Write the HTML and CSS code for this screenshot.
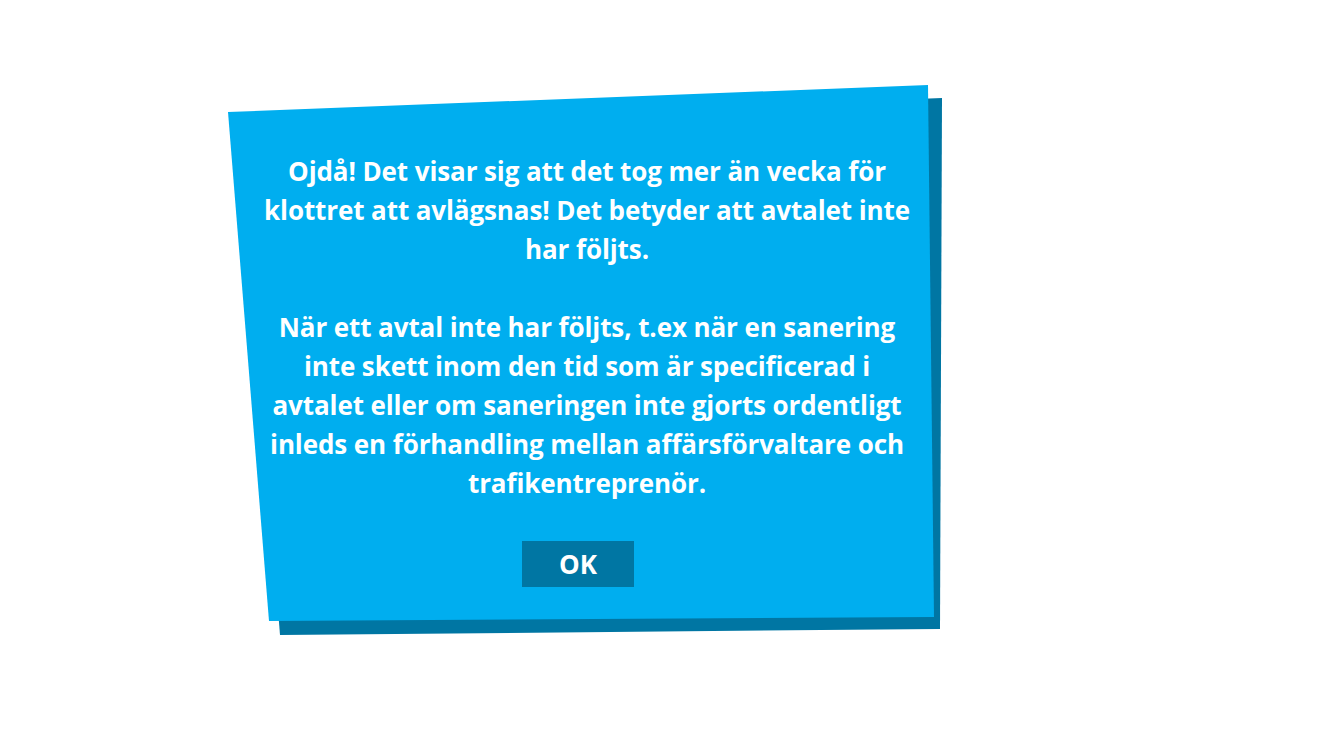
FILE: index.html
```html
<!DOCTYPE html>
<html lang="sv">
<head>
<meta charset="utf-8">
<title>Ojdå!</title>
<link rel="stylesheet" href="styles.css">
</head>
<body>
<div class="scene">
  <svg class="paper" width="716" height="552" viewBox="0 0 716 552" aria-hidden="true">
    <polygon class="shadow" points="13,41 715,14 713,545 53,551"/>
    <polygon class="sheet" points="1,28 701,1 707,533 42,537"/>
  </svg>
  <div class="content">
    <p class="message">Ojdå! Det visar sig att det tog mer än vecka för<br>klottret att avlägsnas! Det betyder att avtalet inte<br>har följts.<br><br>När ett avtal inte har följts, t.ex när en sanering<br>inte skett inom den tid som är specificerad i<br>avtalet eller om saneringen inte gjorts ordentligt<br>inleds en förhandling mellan affärsförvaltare och<br>trafikentreprenör.</p>
    <button class="ok">OK</button>
  </div>
</div>
</body>
</html>
```

FILE: styles.css
```css
html, body {
  margin: 0;
  padding: 0;
  background: #ffffff;
}

body {
  width: 1334px;
  height: 750px;
  overflow: hidden;
  font-family: "Open Sans", "Lato", sans-serif;
}

.scene {
  position: relative;
  width: 716px;
  height: 552px;
  margin: 84px 0 0 227px;
}

.paper {
  position: absolute;
  left: 0;
  top: 0;
}

.shadow {
  fill: #0076a3;
}

.sheet {
  fill: #00aeef;
}

.content {
  position: relative;
  width: 660px;
  padding: 68px 0 0 30px;
  display: flex;
  flex-direction: column;
}

.message {
  margin: 0;
  color: #ffffff;
  font-weight: 700;
  font-size: 26px;
  line-height: 39px;
  letter-spacing: -0.1px;
  text-align: center;
  white-space: nowrap;
}

.ok {
  margin: 38px 0 0 265px;
  width: 112px;
  height: 46px;
  border: 0;
  padding: 0;
  background: #0076a3;
  color: #ffffff;
  font-family: "Open Sans", "Lato", sans-serif;
  font-weight: 700;
  font-size: 26px;
  cursor: pointer;
}
```
